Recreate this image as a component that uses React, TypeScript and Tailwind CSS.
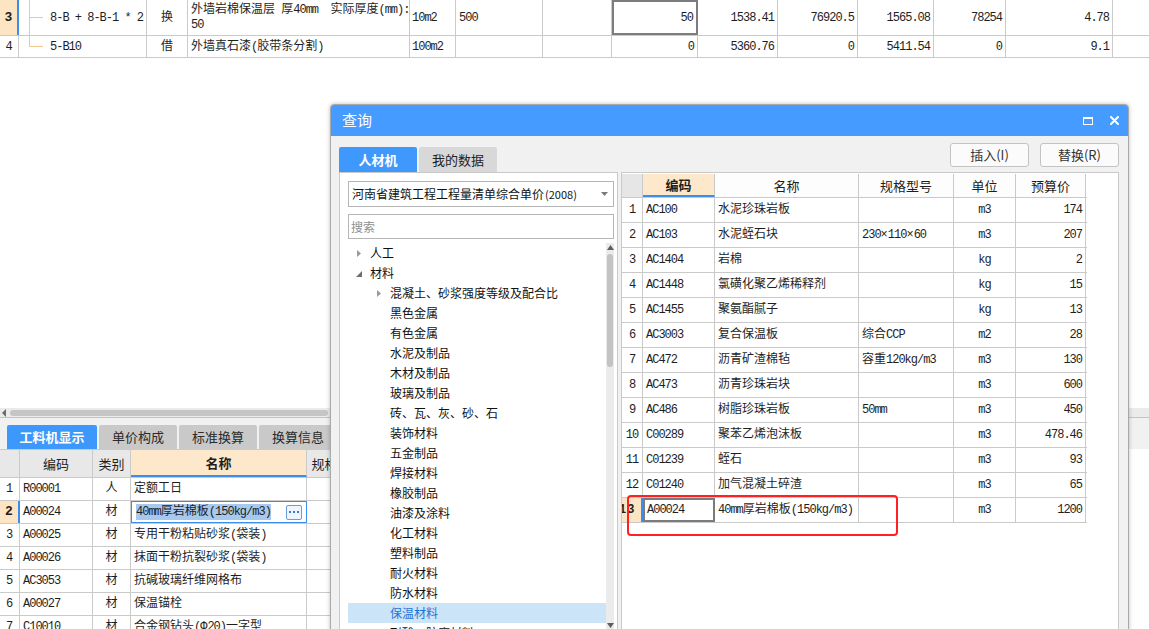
import React from "react";

// ── helpers ────────────────────────────────────────────────

// ASCII runs get tighter tracking so mono digits sit close like the grid font
function M({ t }: { t: string }) {
  const parts = t.split(/([\x20-\x7e]+)/);
  return (
    <>
      {parts.map((p, i) =>
        i % 2 ? (
          <span key={i} className="tracking-[-1px]">
            {p}
          </span>
        ) : (
          <React.Fragment key={i}>{p}</React.Fragment>
        )
      )}
    </>
  );
}

const cell = "shrink-0 h-full flex items-center border-r border-[#cacaca]";
const ui = "font-['Noto_Sans_CJK_SC','Liberation_Sans',sans-serif]";

// ── top grid (two visible rows) ────────────────────────────

function TreeLine({ last }: { last?: boolean }) {
  return (
    <div className="ml-[10px] w-[14px] flex flex-col shrink-0">
      <div className="h-1/2 border-l border-b border-[#f2c890]" />
      {!last && <div className="h-1/2 border-l border-[#f2c890]" />}
    </div>
  );
}

function TopGrid() {
  return (
    <div className="shrink-0 text-[12px] text-[#1e1e1e]">
      <div className="flex h-[36px] border-b border-[#cacaca]">
        <div className="w-[19px] shrink-0 flex items-center justify-center bg-[#fde4c2] border-r-2 border-[#3a8ef0] font-bold text-[13px]">
          3
        </div>
        <div className="w-[128px] shrink-0 h-full flex items-stretch border-r border-[#cacaca]">
          <TreeLine />
          <div className="pl-[7px] flex items-center whitespace-pre">
            <M t="8-B + 8-B-1 * 2" />
          </div>
        </div>
        <div className={`${cell} w-[41px] justify-center`}>换</div>
        <div className={`${cell} w-[222px] flex-col !items-start justify-center pl-[3px] leading-[15px] whitespace-pre`}>
          <span>
            <M t="外墙岩棉保温层 厚40mm  实际厚度(mm):" />
          </span>
          <span>
            <M t="50" />
          </span>
        </div>
        <div className={`${cell} w-[46px] pl-[2px]`}>
          <M t="10m2" />
        </div>
        <div className={`${cell} w-[87px] pl-[3px]`}>
          <M t="500" />
        </div>
        <div className={`${cell} w-[69px]`} />
        <div className="w-[86px] shrink-0 h-full flex items-center justify-end pr-[3px] border-2 border-[#7d7d7d]">
          <M t="50" />
        </div>
        {[
          ["w-[80px]", "1538.41"],
          ["w-[80px]", "76920.5"],
          ["w-[76px]", "1565.08"],
          ["w-[72px]", "78254"],
          ["w-[107px]", "4.78"],
        ].map(([w, v]) => (
          <div key={v} className={`${cell} ${w} justify-end pr-[3px]`}>
            <M t={v} />
          </div>
        ))}
        <div className="flex-1" />
      </div>

      <div className="flex h-[22px] border-b border-[#cacaca]">
        <div className={`${cell} w-[19px] justify-center`}>4</div>
        <div className="w-[128px] shrink-0 h-full flex items-stretch border-r border-[#cacaca]">
          <TreeLine last />
          <div className="pl-[7px] flex items-center">
            <M t="5-B10" />
          </div>
        </div>
        <div className={`${cell} w-[41px] justify-center`}>借</div>
        <div className={`${cell} w-[222px] pl-[3px]`}>
          <M t="外墙真石漆(胶带条分割)" />
        </div>
        <div className={`${cell} w-[46px] pl-[2px]`}>
          <M t="100m2" />
        </div>
        <div className={`${cell} w-[87px]`} />
        <div className={`${cell} w-[69px]`} />
        {[
          ["w-[86px]", "0", "a"],
          ["w-[80px]", "5360.76", "b"],
          ["w-[80px]", "0", "c"],
          ["w-[76px]", "5411.54", "d"],
          ["w-[72px]", "0", "e"],
          ["w-[107px]", "9.1", "f"],
        ].map(([w, v, k]) => (
          <div key={k} className={`${cell} ${w} justify-end pr-[3px]`}>
            <M t={v} />
          </div>
        ))}
        <div className="flex-1" />
      </div>
    </div>
  );
}

// ── bottom panel (工料机显示) ───────────────────────────────

const matRows = [
  ["1", "R00001", "人", "定额工日"],
  ["2", "A00024", "材", "40mm厚岩棉板(150kg/m3)"],
  ["3", "A00025", "材", "专用干粉粘贴砂浆(袋装)"],
  ["4", "A00026", "材", "抹面干粉抗裂砂浆(袋装)"],
  ["5", "AC3053", "材", "抗碱玻璃纤维网格布"],
  ["6", "A00027", "材", "保温锚栓"],
  ["7", "C10010", "材", "合金钢钻头(Φ20) 一字型"],
];

function BottomPanel() {
  return (
    <div className="h-[221px] shrink-0 flex flex-col">
      {/* horizontal scrollbar */}
      <div className="h-[10px] shrink-0 bg-[#ebebeb] border-b border-[#c4c4c4] flex items-center">
        <svg width="6" height="8" viewBox="0 0 6 8" className="ml-[1px]">
          <path d="M5 0 L1 4 L5 8 Z" fill="#6b6b6b" />
        </svg>
        <div className="ml-[3px] w-[318px] h-[6px] rounded-full bg-[#c5c5c5]" />
      </div>

      {/* tabs */}
      <div className={`h-[31px] shrink-0 bg-[#f1f1f1] flex items-end pl-[7px] gap-[2px] text-[13px] ${ui}`}>
        <div className="w-[90px] h-[24px] bg-[#3d98fc] text-white font-bold flex items-center justify-center rounded-t-[2px]">
          工料机显示
        </div>
        {["单价构成", "标准换算", "换算信息"].map((t) => (
          <div
            key={t}
            className="w-[78px] h-[24px] bg-[#c9c9c9] text-[#2a2a2a] flex items-center justify-center rounded-t-[2px]"
          >
            {t}
          </div>
        ))}
      </div>

      {/* table */}
      <div className="flex-1 bg-white text-[12px] text-[#1e1e1e] overflow-hidden">
        <div className="flex h-[29px] w-[700px] border-y border-[#cacaca] text-[13px]">
          <div className={`${cell} w-[20px] bg-[#e8e8e8]`} />
          <div className={`${cell} w-[73px] bg-[#e8e8e8] justify-center ${ui}`}>编码</div>
          <div className={`${cell} w-[38px] bg-[#e8e8e8] justify-center ${ui}`}>类别</div>
          <div className={`${cell} w-[176px] bg-[#fde8cb] justify-center font-bold border-b-2 border-b-[#3a8ef0] ${ui}`}>
            名称
          </div>
          <div className={`${cell} w-[62px] bg-[#e8e8e8] justify-center ${ui}`}>规格型号</div>
          <div className={`${cell} w-[60px] bg-[#e8e8e8] justify-center ${ui}`}>单位</div>
          <div className={`${cell} w-[80px] bg-[#e8e8e8] justify-center ${ui}`}>数量</div>
          <div className="flex-1 bg-[#e8e8e8]" />
        </div>
        {matRows.map(([n, code, kind, name]) => {
          const sel = n === "2";
          return (
            <div key={n} className="flex h-[23px] w-[700px] border-b border-[#cacaca]">
              <div
                className={`${cell} w-[20px] justify-center ${
                  sel ? "bg-[#fde4c2] font-bold text-[13px] border-r-2 border-r-[#3a8ef0]" : ""
                }`}
              >
                {n}
              </div>
              <div className={`${cell} w-[73px] pl-[3px]`}>
                <M t={code} />
              </div>
              <div className={`${cell} w-[38px] justify-center`}>{kind}</div>
              {sel ? (
                <div className="w-[176px] shrink-0 h-full border border-[#3a8ef0] flex items-center pl-[4px] pr-[4px]">
                  <span className="bg-[#a7c9ef] leading-[16px]">
                    <M t={name} />
                  </span>
                  <div className="ml-auto w-[16px] h-[15px] rounded-[2px] border border-[#6d9bd6] bg-[#eef5fe] flex items-center justify-center gap-[2px]">
                    <span className="w-[2px] h-[2px] bg-[#3a78c8]" />
                    <span className="w-[2px] h-[2px] bg-[#3a78c8]" />
                    <span className="w-[2px] h-[2px] bg-[#3a78c8]" />
                  </div>
                </div>
              ) : (
                <div className={`${cell} w-[176px] pl-[3px]`}>
                  <M t={name} />
                </div>
              )}
              <div className={`${cell} w-[62px]`} />
              <div className={`${cell} w-[60px]`} />
              <div className={`${cell} w-[80px]`} />
            </div>
          );
        })}
      </div>
    </div>
  );
}

// ── query dialog ───────────────────────────────────────────

const tree: { lv: 0 | 1; t: string; ar?: "c" | "e"; sel?: boolean }[] = [
  { lv: 0, t: "人工", ar: "c" },
  { lv: 0, t: "材料", ar: "e" },
  { lv: 1, t: "混凝土、砂浆强度等级及配合比", ar: "c" },
  { lv: 1, t: "黑色金属" },
  { lv: 1, t: "有色金属" },
  { lv: 1, t: "水泥及制品" },
  { lv: 1, t: "木材及制品" },
  { lv: 1, t: "玻璃及制品" },
  { lv: 1, t: "砖、瓦、灰、砂、石" },
  { lv: 1, t: "装饰材料" },
  { lv: 1, t: "五金制品" },
  { lv: 1, t: "焊接材料" },
  { lv: 1, t: "橡胶制品" },
  { lv: 1, t: "油漆及涂料" },
  { lv: 1, t: "化工材料" },
  { lv: 1, t: "塑料制品" },
  { lv: 1, t: "耐火材料" },
  { lv: 1, t: "防水材料" },
  { lv: 1, t: "保温材料", sel: true },
  { lv: 1, t: "耐酸、防腐材料" },
];

const resRows = [
  ["1", "AC100", "水泥珍珠岩板", "", "m3", "174"],
  ["2", "AC103", "水泥蛭石块", "230×110×60", "m3", "207"],
  ["3", "AC1404", "岩棉", "", "kg", "2"],
  ["4", "AC1448", "氯磺化聚乙烯稀释剂", "", "kg", "15"],
  ["5", "AC1455", "聚氨酯腻子", "", "kg", "13"],
  ["6", "AC3003", "复合保温板", "综合CCP", "m2", "28"],
  ["7", "AC472", "沥青矿渣棉毡", "容重120kg/m3", "m3", "130"],
  ["8", "AC473", "沥青珍珠岩块", "", "m3", "600"],
  ["9", "AC486", "树脂珍珠岩板", "50mm", "m3", "450"],
  ["10", "C00289", "聚苯乙烯泡沫板", "", "m3", "478.46"],
  ["11", "C01239", "蛭石", "", "m3", "93"],
  ["12", "C01240", "加气混凝土碎渣", "", "m3", "65"],
  ["13", "A00024", "40mm厚岩棉板(150kg/m3)", "", "m3", "1200"],
];

function TreePanel() {
  return (
    <div className="w-[279px] shrink-0 h-full bg-white border border-[#c9c9c9] flex flex-col pl-[8px] pr-[3px] pt-[8px]">
      <div className={`h-[26px] shrink-0 border border-[#b5b5b5] flex items-center pl-[3px] pr-[5px] text-[12px] text-[#111] ${ui}`}>
        <span className="flex-1">
          河南省建筑工程工程量清单综合单价<span className="text-[11px] ml-[1px]">(2008)</span>
        </span>
        <svg width="7" height="4" viewBox="0 0 7 4">
          <path d="M0 0 H7 L3.5 4 Z" fill="#7a7a7a" />
        </svg>
      </div>
      <div className={`mt-[7px] h-[25px] shrink-0 border border-[#b5b5b5] flex items-center pl-[2px] text-[12px] text-[#8f8f8f] ${ui}`}>
        搜索
      </div>
      <div className="mt-[4px] flex-1 flex min-h-0">
        <div className={`flex-1 text-[12px] leading-[20px] text-[#111] ${ui}`}>
          {tree.map((r) => (
            <div
              key={r.t}
              className={`h-[20px] flex items-center ${r.lv === 0 ? "pl-[7px]" : "pl-[27px]"} ${
                r.sel ? "bg-[#cce4f8] text-[#1c74d8]" : ""
              }`}
            >
              <span className="w-[15px] flex items-center">
                {r.ar === "c" && (
                  <svg width="4" height="7" viewBox="0 0 4 7" className="ml-[2px]">
                    <path d="M0 0 L4 3.5 L0 7 Z" fill="#9a9a9a" />
                  </svg>
                )}
                {r.ar === "e" && (
                  <svg width="6" height="6" viewBox="0 0 6 6" className="ml-[1px] mt-[2px]">
                    <path d="M6 0 V6 H0 Z" fill="#6e6e6e" />
                  </svg>
                )}
              </span>
              {r.t}
            </div>
          ))}
        </div>
        {/* vertical scrollbar */}
        <div className="w-[8px] shrink-0 bg-[#ebebeb] flex flex-col items-center pb-[2px]">
          <svg width="7" height="5" viewBox="0 0 7 5" className="mt-[2px]">
            <path d="M0 5 L3.5 0 L7 5 Z" fill="#5e5e5e" />
          </svg>
          <div className="mt-[4px] w-[6px] h-[113px] rounded-full bg-[#c3c3c3]" />
          <div className="flex-1" />
          <svg width="7" height="5" viewBox="0 0 7 5">
            <path d="M0 0 H7 L3.5 5 Z" fill="#5e5e5e" />
          </svg>
        </div>
      </div>
    </div>
  );
}

function ResultPanel() {
  const h = `${cell} bg-[#fdfdfd] justify-center text-[13px] ${ui}`;
  return (
    <div className="flex-1 h-full bg-white border border-[#c9c9c9] pt-[1px] text-[12px] text-[#1e1e1e]">
      <div className="flex h-[24px] w-[465px] border-b border-[#cacaca]">
        <div className={`${cell} w-[21px] bg-[#e6e6e6]`} />
        <div className={`${cell} w-[72px] bg-[#fde8cb] justify-center font-bold text-[13px] border-b-2 border-b-[#3a8ef0] ${ui}`}>
          编码
        </div>
        <div className={`${h} w-[144px]`}>名称</div>
        <div className={`${h} w-[95px]`}>规格型号</div>
        <div className={`${h} w-[62px]`}>单位</div>
        <div className={`${h} w-[70px]`}>预算价</div>
      </div>
      {resRows.map(([n, code, name, spec, unit, price]) => {
        const sel = n === "13";
        return (
          <div key={n} className="flex h-[25px] w-[465px] border-b border-[#cacaca]">
            <div
              className={`${cell} w-[21px] overflow-hidden ${
                sel ? "bg-[#fde4c2] font-bold border-r-2 border-r-[#3a8ef0] justify-start" : "justify-center"
              }`}
            >
              {sel ? (
                <span className="text-[12px] -ml-[3px] tracking-[1px] whitespace-nowrap">13</span>
              ) : (
                <M t={n} />
              )}
            </div>
            <div
              className={
                sel
                  ? "w-[72px] shrink-0 h-full flex items-center pl-[2px] border-2 border-[#7b7b7b]"
                  : `${cell} w-[72px] pl-[3px]`
              }
            >
              <M t={code} />
            </div>
            <div className={`${cell} w-[144px] pl-[3px] whitespace-nowrap`}>
              <M t={name} />
            </div>
            <div className={`${cell} w-[95px] pl-[3px] whitespace-nowrap`}>
              <M t={spec} />
            </div>
            <div className={`${cell} w-[62px] justify-center`}>
              <M t={unit} />
            </div>
            <div className={`${cell} w-[70px] justify-end pr-[3px]`}>
              <M t={price} />
            </div>
          </div>
        );
      })}
    </div>
  );
}

function QueryDialog() {
  return (
    <div className="absolute left-[330px] top-[104px] w-[799px] h-[530px] border border-[#a9a9a9] rounded-t-[4px] bg-[#f1f1f1] flex flex-col overflow-hidden shadow-[0_0_4px_rgba(0,0,0,0.25)]">
      <div className="h-[31px] shrink-0 bg-[#459bff] flex items-center pl-[11px] pr-[9px] text-white">
        <span className={`flex-1 text-[15px] ${ui}`}>查询</span>
        <div className="w-[10px] h-[8px] border border-white border-t-2 mr-[17px]" />
        <svg width="9" height="9" viewBox="0 0 9 9">
          <path d="M1 1 L8 8 M8 1 L1 8" stroke="#fff" strokeWidth="2" strokeLinecap="round" />
        </svg>
      </div>

      <div className="flex-1 flex flex-col pl-[8px] pr-[9px] pt-[7px] pb-[2px] min-h-0">
        <div className={`h-[29px] shrink-0 flex text-[13px] ${ui}`}>
          <div className="self-end h-[25px] w-[78px] bg-[#3f98fc] text-white font-bold flex items-center justify-center rounded-t-[2px]">
            人材机
          </div>
          <div className="self-end ml-[2px] h-[25px] w-[78px] bg-[#d8d8d8] text-[#222] flex items-center justify-center rounded-t-[2px]">
            我的数据
          </div>
          <div className="flex-1" />
          <button className="h-[24px] w-[79px] bg-[#fbfbfb] border border-[#c3c3c3] rounded-[3px] text-[#333]">
            插入(I)
          </button>
          <button className="ml-[11px] h-[24px] w-[79px] bg-[#fbfbfb] border border-[#c3c3c3] rounded-[3px] text-[#333]">
            替换(R)
          </button>
        </div>
        <div className="flex-1 flex gap-[3px] min-h-0">
          <TreePanel />
          <ResultPanel />
        </div>
      </div>
    </div>
  );
}

// ── page ───────────────────────────────────────────────────

export default function App() {
  return (
    <div className="relative w-[1149px] h-[629px] overflow-hidden bg-white flex flex-col font-['Liberation_Mono','Noto_Sans_CJK_SC',monospace]">
      <TopGrid />
      <div className="flex-1" />
      <BottomPanel />
      <QueryDialog />
      {/* red annotation box */}
      <div className="absolute left-[627px] top-[495px] w-[271px] h-[41px] border-2 border-[#ff2121] rounded-[4px]" />
    </div>
  );
}
